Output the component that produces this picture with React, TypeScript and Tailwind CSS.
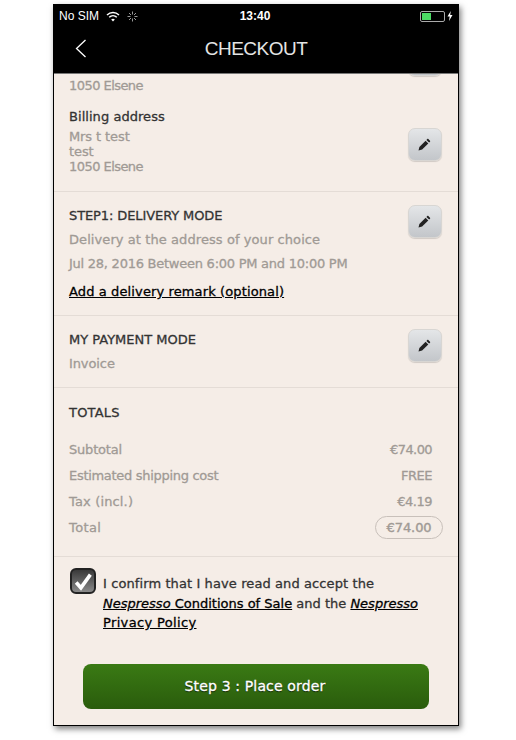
const FONT = { sans: "font-['DejaVu_Sans',sans-serif]" };

function EditButton() {
  return (
    <div className="flex h-[33px] w-[34px] shrink-0 items-center justify-center rounded-[7px] border border-[#d8d6d3] bg-gradient-to-b from-[#e4e6e8] to-[#c3c6ca] shadow-[0_1px_1px_rgba(0,0,0,0.15)]">
      <svg width="14" height="14" viewBox="0 0 14 14" fill="#222" className="-ml-[2px]">
        <path d="M1.5 12.5 L2.4 8.9 L8.6 2.7 L11.3 5.4 L5.1 11.6 Z" />
        <path d="M9.4 1.9 L10.3 1 C10.6 .7 11 .7 11.3 1 L13 2.7 C13.3 3 13.3 3.4 13 3.7 L12.1 4.6 Z" />
      </svg>
    </div>
  );
}

const TOTALS = [
  { label: "Subtotal", value: "€74.00", labelClass: "tracking-[-0.2px]", valueClass: "tracking-[-0.6px]" },
  { label: "Estimated shipping cost", value: "FREE", labelClass: "tracking-[-0.3px]", valueClass: "tracking-[-0.5px]" },
  { label: "Tax (incl.)", value: "€4.19", labelClass: "tracking-[0.15px]", valueClass: "tracking-[-0.5px]" },
];

export default function App() {
  return (
    <div className={`h-[740px] w-[516px] overflow-hidden bg-white pl-[53px] pt-[4px] ${FONT.sans}`}>
      <div className="flex h-[722px] w-[406px] flex-col overflow-hidden border border-black bg-[#f5ede7] shadow-[2px_3px_6px_rgba(0,0,0,0.5)]">
        <header className="z-10 h-[69px] shrink-0 border-b border-[#777] bg-black text-white">
          <div className="flex h-[22px] items-center justify-between pl-[5px] pr-[5px] font-['Liberation_Sans',sans-serif] text-[12px]">
            <div className="flex w-[150px] items-center gap-[7px]">
              <span>No SIM</span>
              <svg width="14" height="11" viewBox="0 0 14 11" fill="none" stroke="white" strokeWidth="1.5">
                <path d="M1 4 C4.5 .8 9.5 .8 13 4" />
                <path d="M3.2 6.2 C5.4 4.2 8.6 4.2 10.8 6.2" />
                <path d="M7 10.5 L5.2 8.4 C6.2 7.5 7.8 7.5 8.8 8.4 Z" fill="white" stroke="none" />
              </svg>
              <svg width="11" height="11" viewBox="0 0 11 11" stroke="#999" strokeWidth="1">
                <path d="M5.5 0.5V3.5M5.5 7.5V10.5M0.5 5.5H3.5M7.5 5.5H10.5M2 2L4 4M7 7L9 9M9 2L7 4M4 7L2 9" />
              </svg>
            </div>
            <span className="mr-[2px] font-bold">13:40</span>
            <div className="flex w-[150px] items-center justify-end gap-[2px]">
              <div className="flex h-[11px] w-[25px] rounded-[2px] border border-[#aaa] p-[1px]">
                <div className="w-[9px] bg-[#4cd964]" />
              </div>
              <svg width="6" height="10" viewBox="0 0 6 10" fill="white">
                <path d="M3.8 0 L0.5 5.6 H2.7 L2 10 L5.5 4 H3.2 Z" />
              </svg>
            </div>
          </div>
          <div className="relative flex h-[45px] items-center justify-center">
            <svg className="absolute left-[21px] top-[12px]" width="12" height="19" viewBox="0 0 12 19" fill="none" stroke="white" strokeWidth="1.3">
              <path d="M10.5 1 L1.5 9.5 L10.5 18" />
            </svg>
            <span className="font-['Liberation_Sans',sans-serif] text-[19px] tracking-[-0.5px] text-[#e4e4e4]">CHECKOUT</span>
          </div>
        </header>

        <main className="flex min-h-0 flex-1 flex-col overflow-hidden text-[13px] tracking-[-0.1px] text-[#a09a95] [-webkit-text-stroke:0.3px]">
          <section className="relative h-[118px] shrink-0 border-b border-[#e4dcd6] pl-[15px]">
            <div className="absolute right-[16px] top-[-31px]">
              <EditButton />
            </div>
            <p className="mt-[3px] leading-[17px] tracking-[-0.55px]">1050 Elsene</p>
            <p className="mt-[14px] leading-[17px] tracking-[0.05px] text-[#333]">Billing address</p>
            <div className="mt-[4px] leading-[15px]">
              <p>Mrs t test</p>
              <p>test</p>
              <p className="tracking-[-0.55px]">1050 Elsene</p>
            </div>
            <div className="absolute right-[16px] top-[54px]">
              <EditButton />
            </div>
          </section>

          <section className="relative h-[124px] shrink-0 border-b border-[#e4dcd6] pl-[15px] pt-[15px]">
            <p className="leading-[17px] text-[#333]">STEP1: DELIVERY MODE</p>
            <p className="mt-[7px] leading-[17px] tracking-[0.08px]">Delivery at the address of your choice</p>
            <p className="mt-[7px] leading-[17px] tracking-[-0.25px]">Jul 28, 2016 Between 6:00 PM and 10:00 PM</p>
            <p className="mt-[11px] leading-[17px] tracking-[0.12px] text-black underline">Add a delivery remark (optional)</p>
            <div className="absolute right-[16px] top-[13px]">
              <EditButton />
            </div>
          </section>

          <section className="relative h-[72px] shrink-0 border-b border-[#e4dcd6] pl-[15px] pt-[15px]">
            <p className="leading-[17px] tracking-[0px] text-[#333]">MY PAYMENT MODE</p>
            <p className="mt-[7px] leading-[17px]">Invoice</p>
            <div className="absolute right-[16px] top-[13px]">
              <EditButton />
            </div>
          </section>

          <section className="h-[169px] shrink-0 border-b border-[#e4dcd6] pl-[15px] pr-[26px] pt-[16px]">
            <p className="leading-[17px] tracking-[0.2px] text-[#333]">TOTALS</p>
            <div className="mt-[20px] flex flex-col gap-[9px]">
              {TOTALS.map((t) => (
                <div key={t.label} className="flex justify-between leading-[17px]">
                  <span className={t.labelClass}>{t.label}</span>
                  <span className={t.valueClass}>{t.value}</span>
                </div>
              ))}
              <div className="-mr-[11px] flex items-center justify-between leading-[17px]">
                <span className="tracking-[0.4px]">Total</span>
                <span className="-my-[3px] rounded-full border border-[#c8c0ba] px-[10.5px] py-[2px] [-webkit-text-stroke:0.4px]">€74.00</span>
              </div>
            </div>
          </section>

          <section className="flex shrink-0 gap-[7px] pl-[16px] pt-[11px] text-[#333]">
            <div className="flex h-[26px] w-[26px] shrink-0 items-center justify-center rounded-[6px] border-2 border-[#222] bg-gradient-to-b from-[#3a3a3a] to-[#8a8a8a]">
              <svg width="20" height="19" viewBox="0 0 19 18" fill="none" stroke="white" strokeWidth="3.4">
                <path d="M3 10 L7.5 15 L16.5 2.5" />
              </svg>
            </div>
            <p className="pt-[6px] leading-[19.5px] tracking-[0.1px]">
              I confirm that I have read and accept the
              <br />
              <span className="tracking-[0px]">
                <span className="text-black underline">
                  <i>Nespresso</i> Conditions of Sale
                </span>{" "}
                and the{" "}
                <span className="text-black underline">
                  <i>Nespresso</i>
                  <br />
                  <span className="tracking-[0.35px]">Privacy Policy</span>
                </span>
              </span>
            </p>
          </section>

          <div className="mt-auto px-[29px] pb-[16px]">
            <button className="h-[45px] w-full rounded-[8px] bg-gradient-to-b from-[#3a7a14] to-[#2a5c0c] pr-[2px] text-[14px] tracking-[0.15px] text-white [text-shadow:0_1px_1px_rgba(0,0,0,0.7)]">
              Step 3 : Place order
            </button>
          </div>
        </main>
      </div>
    </div>
  );
}
